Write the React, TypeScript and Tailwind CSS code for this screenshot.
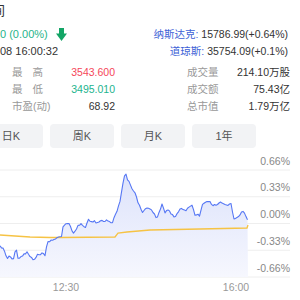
import React from 'react'

const blue: [number, number][] = [
  [0, 247], [3, 248], [7, 258], [10, 255], [13, 262], [16, 247], [18, 258], [22, 256], [27, 253],
  [32, 257], [33, 260], [37, 255], [42, 253], [45, 255], [47, 243], [53, 240], [58, 238], [62, 237],
  [63, 228], [67, 222], [70, 225], [73, 235], [77, 227], [82, 223], [85, 230], [88, 220], [95, 222],
  [100, 222], [107, 220], [112, 223], [115, 215], [118, 208], [120, 202], [122, 190], [125, 172],
  [128, 180], [132, 188], [135, 192], [138, 202], [143, 213], [147, 207], [150, 208], [153, 212],
  [157, 218], [162, 205], [165, 213], [168, 210], [175, 218], [180, 208], [187, 210], [192, 205],
  [195, 215], [200, 215], [203, 203], [208, 200], [213, 205], [220, 203], [227, 205], [232, 203],
  [233, 220], [238, 217], [242, 212], [245, 213], [248, 222],
]

const avg: [number, number][] = [
  [0, 235], [30, 237], [50, 237.5], [60, 237.5], [115, 237], [118, 233], [127, 232],
  [150, 230], [200, 229], [247, 228], [248, 225],
]

// jagged tick line: interpolate key points, add small deterministic noise
function ticks() {
  const out: [number, number][] = []
  for (let x = 0; x <= 248; x += 1.5) {
    let i = 0
    while (i < blue.length - 2 && blue[i + 1][0] < x) i++
    const [x0, y0] = blue[i]
    const [x1, y1] = blue[i + 1]
    const t = x1 === x0 ? 0 : Math.min(1, Math.max(0, (x - x0) / (x1 - x0)))
    const s = Math.sin(x * 12.9898) * 43758.5453
    const n = (s - Math.floor(s) - 0.5) * 2.4
    out.push([x, y0 + (y1 - y0) * t + n])
  }
  return out
}

const toPath = (pts: [number, number][]) =>
  pts.map(([x, y], i) => `${i ? 'L' : 'M'}${x.toFixed(1)} ${y.toFixed(1)}`).join(' ')

const gridYs = [170, 196.75, 223.5, 250.25, 277]
const pctLabels = ['0.66%', '0.33%', '0.00%', '-0.33%', '-0.66%']

function Stat({ label, value, color, wide }: { label: React.ReactNode; value: string; color: string; wide?: boolean }) {
  return (
    <div className={`flex h-[17px] items-center justify-between ${wide ? 'w-[103px] ml-[12px]' : 'w-[103px]'}`}>
      <span className="text-[#999]">{label}</span>
      <span className={color}>{value}</span>
    </div>
  )
}

export default function App() {
  const line = ticks()
  const fill = `${toPath(line)} L248 277 L0 277 Z`

  return (
    <div
      className="w-[300px] h-[300px] overflow-hidden bg-white text-[10.5px] leading-none text-[#333]"
      style={{ fontFamily: '"Liberation Sans", Arial, "Noto Sans CJK SC", sans-serif' }}
    >
      {/* title (page is cropped on the left) */}
      <div className="h-[20px] flex items-center ml-[-8px] text-[13px] text-[#333]">间</div>

      {/* price + index line */}
      <div className="mt-[5px] h-[18px] flex items-center justify-between pr-[12px]">
        <div className="flex items-center gap-[8px] text-[#26b48a] text-[11px]">
          <span>0 (0.00%)</span>
          <svg width="11" height="13" viewBox="0 0 11 13">
            <rect x="3" y="0" width="5" height="6.5" fill="#13a566" />
            <path d="M0 5.5 H11 L5.5 13 Z" fill="#13a566" />
          </svg>
        </div>
        <div>
          <span className="text-[#3d5fd6]">纳斯达克:</span> 15786.99(+0.64%)
        </div>
      </div>

      <div className="h-[17px] flex items-center justify-between pr-[12px]">
        <span className="text-[11px]">08 16:00:32</span>
        <div>
          <span className="text-[#3d5fd6]">道琼斯:</span> 35754.09(+0.1%)
        </div>
      </div>

      {/* stats */}
      <div className="mt-[4px] flex">
        <div className="flex flex-col">
          <Stat wide label={<span className="tracking-[10px]">最高</span>} value="3543.600" color="text-[#f5475a]" />
          <Stat wide label={<span className="tracking-[10px]">最低</span>} value="3495.010" color="text-[#22b48e]" />
          <Stat wide label="市盈(动)" value="68.92" color="text-[#333]" />
        </div>
        <div className="ml-[72px] flex flex-col">
          <Stat label="成交量" value="214.10万股" color="text-[#333]" />
          <Stat label="成交额" value="75.43亿" color="text-[#333]" />
          <Stat label="总市值" value="1.79万亿" color="text-[#333]" />
        </div>
      </div>

      {/* period tabs */}
      <div className="mt-[9px] ml-[-21px] flex gap-[7px] text-[11px] text-[#555]">
        {['日K', '周K', '月K', '1年'].map(t => (
          <div key={t} className="w-[64px] h-[24px] rounded-[4px] bg-[#f2f3f5] flex items-center justify-center">
            {t}
          </div>
        ))}
      </div>

      {/* intraday chart */}
      <svg width="300" height="152" viewBox="0 148 300 152" className="block">
        <defs>
          <linearGradient id="area" x1="0" y1="0" x2="0" y2="1">
            <stop offset="0%" stopColor="#dde3fb" />
            <stop offset="100%" stopColor="#f6f7fe" />
          </linearGradient>
        </defs>
        {gridYs.map(y => (
          <line key={y} x1="0" x2="290" y1={y} y2={y} stroke="#eeeeee" strokeWidth="1" />
        ))}
        <path d={fill} fill="url(#area)" />
        <path d={toPath(avg)} fill="none" stroke="#f6c344" strokeWidth="1.3" />
        <path d={toPath(line)} fill="none" stroke="#5677f4" strokeWidth="1.1" strokeLinejoin="round" />
        {pctLabels.map((l, i) => (
          <text key={l} x="290" y={gridYs[i] - 5.5} textAnchor="end" fontSize="10.5" fill="#888"
            fontFamily='"Liberation Sans", Arial, sans-serif'>
            {l}
          </text>
        ))}
        <text x="66" y="291" textAnchor="middle" fontSize="10.5" fill="#999" fontFamily='"Liberation Sans", Arial, sans-serif'>12:30</text>
        <text x="236" y="291" textAnchor="middle" fontSize="10.5" fill="#999" fontFamily='"Liberation Sans", Arial, sans-serif'>16:00</text>
      </svg>
    </div>
  )
}
